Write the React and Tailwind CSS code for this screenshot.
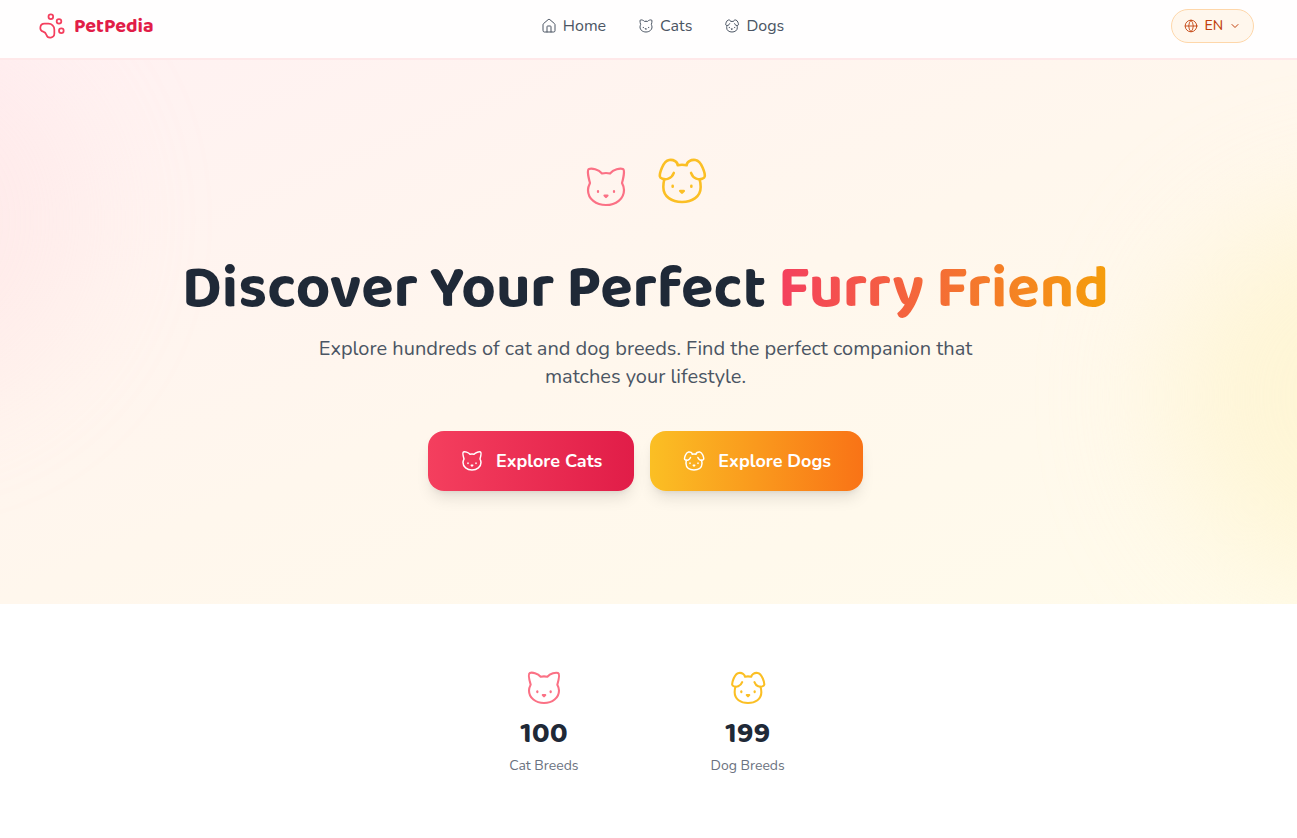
import React from "react";
import { Cat, ChevronDown, Dog, Globe, House, PawPrint } from "lucide-react";

const navLinks = [
    { label: "Home", href: "#home", icon: House },
    { label: "Cats", href: "#cats", icon: Cat },
    { label: "Dogs", href: "#dogs", icon: Dog },
];

const stats = [
    { label: "Cat Breeds", value: 100, icon: Cat, color: "text-[#fb7185]" },
    { label: "Dog Breeds", value: 199, icon: Dog, color: "text-[#fbbf24]" },
];

const Navbar = () => {
    return (
        <header className="border-b-2 border-[#ffe8e9] bg-[#fffefe]">
            <div className="flex h-[58px] items-start justify-between pl-[38px] pr-[43px] pt-[9px]">
                <a href="#home" className="flex h-[34px] items-center gap-2 text-[#e11d48]">
                    <PawPrint size={28} strokeWidth={1.5} className="text-[#f43f5e]" />
                    <span className="font-['Baloo_2','Lato',sans-serif] text-xl font-bold">PetPedia</span>
                </a>

                <nav className="flex h-[34px] items-center gap-8">
                    {navLinks.map(({ label, href, icon: Icon }) => (
                        <a key={label} href={href} className="flex items-center gap-1.5 text-base text-[#4b5563]">
                            <Icon size={16} strokeWidth={1.5} />
                            {label}
                        </a>
                    ))}
                </nav>

                <button
                    type="button"
                    className="flex h-[34px] items-center gap-1.5 rounded-full border border-[#fed7aa] bg-[#fff7ed] px-3 text-sm font-medium text-[#c2410c]"
                >
                    <Globe size={14} strokeWidth={1.5} />
                    EN
                    <ChevronDown size={12} />
                </button>
            </div>
        </header>
    );
};

const Hero = () => {
    return (
        <section
            id="home"
            className="relative overflow-hidden bg-linear-to-br/srgb from-[#fff1f2] via-[#fff7ed] to-[#fffbeb] pb-[113px] pl-6 pr-[30px] pt-[93px]"
        >
            <div className="absolute -left-72 -top-8 h-96 w-96 rounded-full bg-[#fecdd3] opacity-20 blur-3xl" />
            <div className="absolute -right-64 top-36 h-96 w-96 rounded-full bg-[#fef3c7] opacity-60 blur-3xl" />

            <div className="relative flex flex-col items-center text-center">
                <div className="flex items-start gap-6">
                    <Cat size={48} strokeWidth={1.1} className="mt-2.5 text-[#fb7185]" />
                    <Dog size={56} strokeWidth={1.1} className="text-[#fbbf24]" />
                </div>

                <h1 className="mt-[42px] font-['Baloo_2','Lato',sans-serif] text-6xl font-bold leading-[72px] text-[#1f2937]">
                    Discover Your Perfect{" "}
                    <span className="bg-linear-to-r/srgb from-[#f43f5e] to-[#f59e0b] bg-clip-text text-transparent">
                        Furry Friend
                    </span>
                </h1>

                <p className="mt-2.5 max-w-2xl text-xl text-[#4b5563]">
                    Explore hundreds of cat and dog breeds. Find the perfect companion that matches your lifestyle.
                </p>

                <div className="mt-10 flex gap-4">
                    <a
                        href="#cats"
                        className="flex h-[60px] items-center gap-3 rounded-2xl bg-linear-to-r/srgb from-[#f43f5e] to-[#e11d48] px-8 text-lg font-bold text-white shadow-lg"
                    >
                        <Cat size={24} strokeWidth={1.5} />
                        Explore Cats
                    </a>
                    <a
                        href="#dogs"
                        className="flex h-[60px] items-center gap-3 rounded-2xl bg-linear-to-r/srgb from-[#fbbf24] to-[#f97316] px-8 text-lg font-bold text-white shadow-lg"
                    >
                        <Dog size={24} strokeWidth={1.5} />
                        Explore Dogs
                    </a>
                </div>
            </div>
        </section>
    );
};

const Stats = () => {
    return (
        <section className="flex justify-center gap-[132px] bg-white py-16 pr-[3px]">
            {stats.map(({ label, value, icon: Icon, color }) => (
                <div key={label} className="flex flex-col items-center">
                    <Icon size={40} strokeWidth={1.25} className={color} />
                    <span className="mt-2 font-['Baloo_2','Lato',sans-serif] text-3xl font-bold text-[#1f2937]">
                        {value}
                    </span>
                    <span className="mt-1 text-sm text-[#6b7280]">{label}</span>
                </div>
            ))}
        </section>
    );
};

const App = () => {
    return (
        <div className="min-h-screen bg-white font-['Nunito','Open_Sans',sans-serif]">
            <Navbar />
            <main>
                <Hero />
                <Stats />
            </main>
        </div>
    );
};

export default App;
